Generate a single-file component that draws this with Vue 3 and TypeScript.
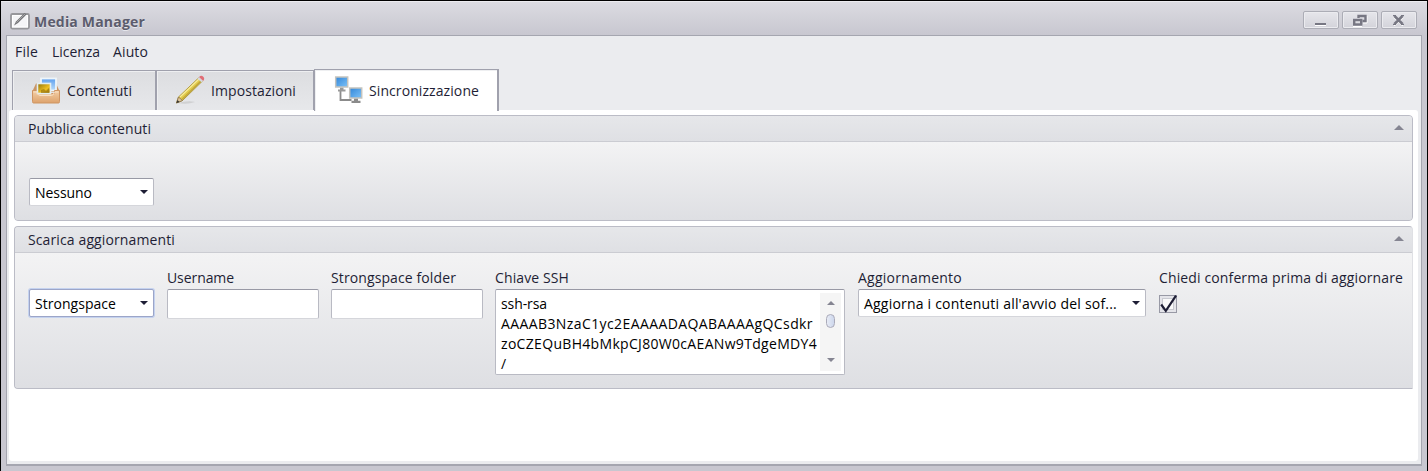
<script setup lang="ts">
import { ref } from 'vue'

// Spreads the letters of a label so that it fills the given width.
const vFit = {
  mounted(el: HTMLElement, binding: { value: number }) {
    const count = (el.textContent ?? '').length
    const natural = el.getBoundingClientRect().width
    el.style.letterSpacing = `${(binding.value - natural) / count}px`
  },
}

const menus = [
  { label: 'File', width: 23 },
  { label: 'Licenza', width: 48 },
  { label: 'Aiuto', width: 35 },
]
const keyLines = [
  { text: 'ssh-rsa', width: 46 },
  { text: 'AAAAB3NzaC1yc2EAAAADAQABAAAAgQCsdkr', width: 312 },
  { text: 'zoCZEQuBH4bMkpCJ80W0cAEANw9TdgeMDY4', width: 316 },
  { text: '/', width: 6 },
]
const username = ref('')
const folder = ref('')
</script>

<template>
  <div class="window">
    <header class="titlebar">
      <svg class="app-icon" width="20" height="18" viewBox="0 0 20 18">
        <rect x="1" y="2" width="18" height="14.500" rx="1.500" fill="#f5f5f7" stroke="#97979b" stroke-width="1.800" />
        <rect x="2.500" y="3.500" width="15" height="11.500" fill="none" stroke="#fff" />
        <path d="M4 13.500l2-4L14.500 1l2 1.500L8 11z" fill="#737376" />
        <path d="M6.500 10.500l8.500-8.500" stroke="#a5a5a8" />
      </svg>
      <span class="title" v-fit="111">Media Manager</span>
      <div class="controls">
        <div class="control"><svg width="34" height="16"><path d="M11 13.500h11" stroke="#fff" /><path d="M11 12h11" stroke="#777783" stroke-width="2" /></svg></div>
        <div class="control"><svg width="34" height="16"><path d="M14 4h10v7h-4M10 14.500h9" fill="none" stroke="#fff" /><path d="M15.500 6V4h7v5h-3" fill="none" stroke="#777783" stroke-width="2.400" /><rect x="11.200" y="8" width="7" height="4.500" fill="#dcdce2" stroke="#777783" stroke-width="2.400" /></svg></div>
        <div class="control"><svg width="34" height="16"><path d="M12 5l9 8.500m0-8.500l-9 8.500" stroke="#fff" stroke-width="2" /><path d="M12.500 4l8 8m0-8l-8 8" stroke="#777783" stroke-width="2.500" /><path d="M11 3.700h3m5 0h3m-11 8.600h3m5 0h3" stroke="#777783" stroke-width="1.200" /></svg></div>
      </div>
    </header>

    <main class="client">
      <nav class="menu"><span v-for="m in menus" :key="m.label"><span v-fit="m.width">{{ m.label }}</span></span></nav>
      <div class="tabs">
        <div class="tab contents">
          <svg width="30" height="28" viewBox="0 0 30 28">
            <defs>
              <linearGradient id="box" x2="0" y2="1"><stop stop-color="#f3cfa6" /><stop offset="1" stop-color="#dda26c" /></linearGradient>
              <linearGradient id="gold" x2="1" y2="1"><stop stop-color="#8f7108" /><stop offset=".6" stop-color="#eec024" /><stop offset="1" stop-color="#a98008" /></linearGradient>
              <linearGradient id="sky" x2="0" y2="1"><stop stop-color="#5c9eee" /><stop offset="1" stop-color="#b9dcfb" /></linearGradient>
            </defs>
            <path d="M5 7.500h20l4 8.500H1z" fill="#c99565" />
            <rect x="10" y="2.500" width="15" height="12" fill="url(#sky)" stroke="#eef5fa" stroke-width="1.800" />
            <path d="M1.500 14.500h5v3h17v-3h5v11q0 1.500-1 1.500H2.500q-1 0-1-1.500z" fill="url(#box)" stroke="#cf9563" />
            <rect x="6.500" y="7.500" width="13" height="10" fill="url(#gold)" stroke="#e3eef0" stroke-width="1.600" />
            <path d="M10 14l3-1 2 2 3-3v5H10z" fill="#8f6e0c" opacity=".6" />
            <path d="M2.500 16H6q1 3.500 3 3.500h11.500q2 0 3-3.500H27.500" fill="none" stroke="#f9e0c3" />
          </svg>
          <span v-fit="65">Contenuti</span>
        </div>
        <div class="tab settings">
          <svg width="30" height="30" viewBox="0 0 30 30">
            <path d="M3 28q10-3 17-1-8 3-17 1z" fill="#bbb" opacity=".5" />
            <path d="M1.500 28l2-6L23.500 3l3.800 3.200L7.500 25.500z" fill="#e2cb4c" stroke="#a8923a" stroke-width=".9" />
            <path d="M5 22L24 4" stroke="#f7ec9c" stroke-width="1.200" /><path d="M7 24.300L26.400 5.500" stroke="#bda23a" stroke-width="1.100" />
            <path d="M1.500 28l2-6 4 3.500z" fill="#dfc69c" stroke="#806743" stroke-width=".7" /><path d="M1.500 28l1-3 2 2z" fill="#333" />
            <path d="M22.500 3.700l4 3.500 1.500-1.500L24.200 2z" fill="#d5d8dd" /><path d="M24 2q2.300-2.300 4.300-.2 1.800 2 0 4.100z" fill="#e06e76" />
          </svg>
          <span v-fit="85">Impostazioni</span>
        </div>
        <div class="tab sync">
          <svg width="30" height="30" viewBox="0 0 30 30">
            <defs><linearGradient id="screen" x2="1" y2="1"><stop stop-color="#3386d8" /><stop offset="1" stop-color="#7cc2f8" /></linearGradient></defs>
            <path d="M6.500 16v9h11" fill="none" stroke="#8b8b8b" stroke-width="1.800" />
            <rect x="1.700" y="2" width="12" height="10" fill="url(#screen)" stroke="#c4c3be" stroke-width="1.500" />
            <path d="M6 12.700h3.500v1.800h2v2H4v-2h2z" fill="#999" />
            <rect x="15.700" y="13" width="12" height="10" fill="url(#screen)" stroke="#c4c3be" stroke-width="1.500" />
            <path d="M20 23.700h4v2h2.500V28H17.500v-2.300H20z" fill="#8b8b8b" />
          </svg>
          <span v-fit="110">Sincronizzazione</span>
        </div>
      </div>

      <div class="page">
        <section class="panel publish">
          <h2><span v-fit="123">Pubblica contenuti</span><i class="up" /></h2>
          <div class="body"><div class="select small"><span v-fit="57">Nessuno</span><i class="down" /></div></div>
        </section>
        <section class="panel download">
          <h2><span v-fit="147">Scarica aggiornamenti</span><i class="up" /></h2>
          <div class="body fields">
            <div class="field first"><div class="select small focused"><span v-fit="81">Strongspace</span><i class="down" /></div></div>
            <div class="field user"><label><span v-fit="67">Username</span></label><input v-model="username" type="text" /></div>
            <div class="field folder"><label><span v-fit="125">Strongspace folder</span></label><input v-model="folder" type="text" /></div>
            <div class="field key">
              <label><span v-fit="74">Chiave SSH</span></label>
              <div class="keybox">
                <div class="lines"><div v-for="l in keyLines" :key="l.text"><span v-fit="l.width">{{ l.text }}</span></div></div>
                <div class="scroll"><i class="up" /><b class="thumb" /><i class="down" /></div>
              </div>
            </div>
            <div class="field update"><label><span v-fit="104">Aggiornamento</span></label><div class="select"><span v-fit="253">Aggiorna i contenuti all'avvio del sof...</span><i class="down" /></div></div>
            <div class="field confirm">
              <label><span v-fit="244">Chiedi conferma prima di aggiornare</span></label>
              <svg class="check" width="19" height="19"><rect x=".5" y=".5" width="17" height="17" fill="#e4e4e9" stroke="#9899a5" /><rect x="3.500" y="3.500" width="11" height="11" fill="#fafafa" stroke="#c9cad1" /><path d="M2.200 9.500L6.800 15.800 17 .7" fill="none" stroke="#1e1e35" stroke-width="2.200" /></svg>
            </div>
          </div>
        </section>
      </div>
    </main>
  </div>
</template>

<style scoped>
* { box-sizing: border-box; }
.window { width: 1428px; height: 471px; border: 1px solid #000; border-bottom: 0; padding: 0 5px 5px; overflow: hidden; display: flex; flex-direction: column; background: linear-gradient(#dcdce2, #c8c7d0 34px, #c8c7d0); box-shadow: inset 0 1px #ececf0; font: 14px/20px "Open Sans", "Noto Sans", sans-serif; color: #1e1e35; }
span { white-space: pre; }
.titlebar { height: 34px; flex: none; display: flex; padding-left: 4px; }
.app-icon { margin-top: 11px; }
.title { margin: 11px 0 0 4px; font-weight: 700; color: #5c5c6d; text-shadow: 0 1px #e6e6ec; }
.controls { display: flex; gap: 3px; margin: 10px 5px 0 auto; }
.control { width: 36px; height: 18px; border: 1px solid #acadb6; border-radius: 2px; background: linear-gradient(#e6e6eb, #d3d3da); box-shadow: inset 0 0 0 1px #ebebef; }
.control svg { display: block; }
.client { flex: 1; background: #ebecef; border: 1px solid #a5a6b0; border-width: 1px 1px 2px; }
.menu { display: flex; height: 33px; padding: 6px 0 0 8px; gap: 14px; }
.menu > span:last-child { margin-left: -1px; }
.tabs { display: flex; align-items: flex-end; height: 41px; padding-left: 5px; }
.tab { display: flex; align-items: center; height: 40px; border: 1px solid #a0a1ad; border-bottom: 0; background: linear-gradient(#dcdde0, #e7e8eb); box-shadow: inset 1px 1px #eeeff1; }
.tab svg { flex: none; margin-bottom: 2px; }
.contents { width: 144px; padding-left: 18px; gap: 6px; }
.settings { width: 158px; padding-left: 18px; gap: 6px; }
.sync { width: 185px; height: 42px; margin-bottom: -1px; padding-left: 19px; gap: 5px; background: #fff; border-right-width: 2px; z-index: 1; }
.page { height: 351px; margin: 0 3px 0 2px; padding: 5px; background: #fff; border-radius: 3px; }
.panel { display: flex; flex-direction: column; border: 1px solid #bbbcc6; border-radius: 4px; background: #dedfe3; overflow: hidden; }
.publish { height: 106px; }
.download { height: 163px; margin-top: 5px; border-right-color: #dfe0e4; border-bottom-right-radius: 0; }
.body { flex: 1; background: linear-gradient(#f3f3f4, #dedfe3); }
h2 { height: 26px; flex: none; margin: 0; padding: 3px 7px 0 13px; display: flex; justify-content: space-between; font: inherit; background: linear-gradient(#e6e7ea, #dfe0e4); border-bottom: 1px solid #cbccd2; }
h2 .up { margin: 6px 1px 0 0; }
i { display: block; width: 0; height: 0; flex: none; }
.up { border: solid transparent; border-width: 0 5px 5px; border-bottom-color: #858592; }
.down { border: solid transparent; border-width: 4px 4px 0; border-top-color: #1e1e35; }
.publish .body { padding: 36px 14px 0; }
.select { height: 28px; display: flex; align-items: center; justify-content: space-between; padding: 0 5px; background: #fff; border: 1px solid #b9bac3; border-top-color: #9899a5; border-bottom-color: #d5d6db; border-radius: 2px; color: #000; }
.select span { padding-top: 1px; }
.small { width: 125px; }
.focused { border-color: #9ca5c8; box-shadow: 0 0 0 1px #c4d2ef; }
.fields { display: flex; padding: 15px 0 0 14px; }
.field label { display: block; height: 21px; }
.first { padding-top: 21px; margin-right: 13px; }
.user, .folder { width: 152px; margin-right: 12px; }
input { display: block; width: 152px; height: 30px; background: #fff; border: 1px solid #b9bac3; border-top-color: #9899a5; border-bottom-color: #d5d6db; border-radius: 2px; outline: 0; }
.key { width: 350px; margin-right: 13px; }
.keybox { height: 86px; display: flex; justify-content: space-between; padding: 3px; background: #fff; border: 1px solid #b9bac3; border-top-color: #9899a5; border-radius: 2px; }
.lines { width: 320px; padding: 1px 0 0 2px; color: #000; }
.lines div { height: 20px; }
.scroll { width: 21px; height: 78px; display: flex; flex-direction: column; align-items: center; padding: 8px 0 9px; background: #f5f5f5; }
.scroll .up, .scroll .down { border-left-width: 4px; border-right-width: 4px; }
.scroll .up { border-bottom-width: 4px; }
.scroll .down { margin-top: auto; border-top-color: #858592; }
.thumb { width: 9px; height: 14px; margin-top: 9px; border: 1px solid #aaaab9; border-radius: 5px; background: linear-gradient(90deg, #e7ebf5, #cdd7ec); }
.update { width: 288px; margin-right: 13px; }
.confirm { width: 248px; }
.check { display: block; margin-top: 6px; }
</style>
